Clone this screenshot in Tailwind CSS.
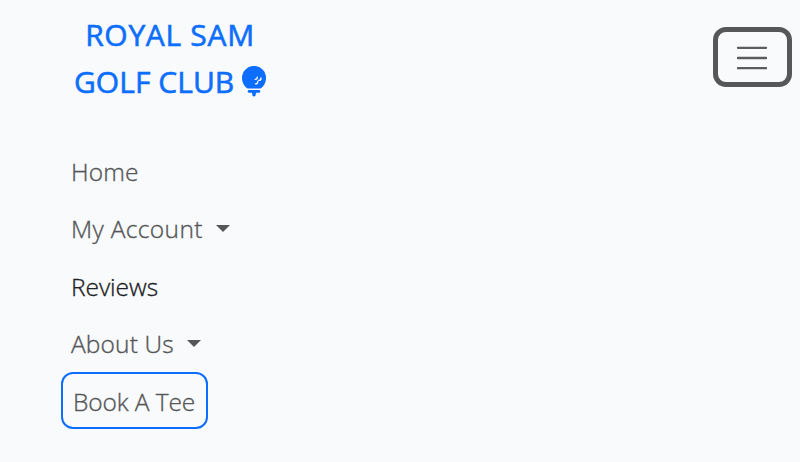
<!DOCTYPE html>
<html lang="en">
<head>
<meta charset="utf-8">
<title>Royal Sam Golf Club</title>
<script src="https://cdn.jsdelivr.net/npm/@tailwindcss/browser@4"></script>
</head>
<body class="h-[462px] overflow-hidden bg-[#f8fafc] font-['Segoe_UI','Open_Sans','Noto_Sans',sans-serif] text-[#555657]">
<nav>
  <header class="flex items-start justify-between pt-[11px] pr-2 pl-[72px]">
    <a href="#" class="w-[196px] text-center text-[30px] leading-[47px] font-normal whitespace-nowrap text-[#0d6efd]">
      <span class="tracking-[0.7px] [-webkit-text-stroke:0.6px_currentColor]">ROYAL SAM</span><br>
      <span class="-ml-px tracking-[0.05px] [-webkit-text-stroke:0.6px_currentColor]">GOLF CLUB</span>
      <svg class="-mr-px inline-block h-[31px] w-6 align-[-4px]" viewBox="0 0 24 31"><g fill="#0d6efd"><path d="M24 11.9c0 4.6-2.3 8.4-5.6 10.6H5.6C2.3 20.300 0 16.500 0 11.900a12 12 0 0 1 24 0z"/><path d="M7 24h10q1.300 0 1.300 1.400T17 26.800h-2.500q-.700 0-.700.700v.800q0 2.200-1.800 2.200t-1.800-2.200v-.800q0-.700-.700-.700H7q-1.300 0-1.300-1.400T7 24z"/></g><g fill="none" stroke="#f8fafc" stroke-width="1.400" stroke-linecap="round"><path d="M15.200 11.200q.200 2.100-2 2.200M19 12q.200 2.200-2.200 2.400M15.700 15.500q.200 2.200-2.200 2.400"/></g></svg>
    </a>
    <button class="mt-4 flex h-[60px] w-[79px] items-center justify-center rounded-[13px] border-[5px] border-[#565758]" aria-label="Toggle navigation">
      <svg class="mt-px mr-px size-[38px]" viewBox="0 0 30 30" fill="none" stroke="#5b5c5e" stroke-width="1.9" stroke-linecap="round"><path d="M4 7h22M4 15h22M4 23h22"/></svg>
    </button>
  </header>
  <ul class="mt-[38px] ml-[61px] flex flex-col items-start text-[24.5px] font-light whitespace-nowrap [-webkit-text-stroke:0.35px_currentColor]">
    <li class="flex h-[57.5px] items-center pt-px pl-[10px]"><a href="#" class="tracking-[0.1px]">Home</a></li>
    <li class="flex h-[57.5px] items-center gap-[13px] pl-[10px]"><a href="#" class="tracking-[0.35px]">My Account</a><i class="-mt-0.5 border-x-[7px] border-t-[7px] border-x-transparent border-t-current"></i></li>
    <li class="flex h-[57.5px] items-center pt-px pl-[10px] text-[#202124]"><a href="#" class="tracking-[-0.05px]">Reviews</a></li>
    <li class="flex h-[57.5px] items-center gap-[13px] pl-[10px]"><a href="#" class="tracking-[0.15px]">About Us</a><i class="-mt-0.5 border-x-[7px] border-t-[7px] border-x-transparent border-t-current"></i></li>
    <li class="-mt-px flex h-[57px] w-[147px] items-center rounded-xl border-2 border-[#0d6efd] pt-1 pl-[10px]"><a href="#" class="tracking-[-0.1px]">Book A Tee</a></li>
  </ul>
</nav>
</body>
</html>
